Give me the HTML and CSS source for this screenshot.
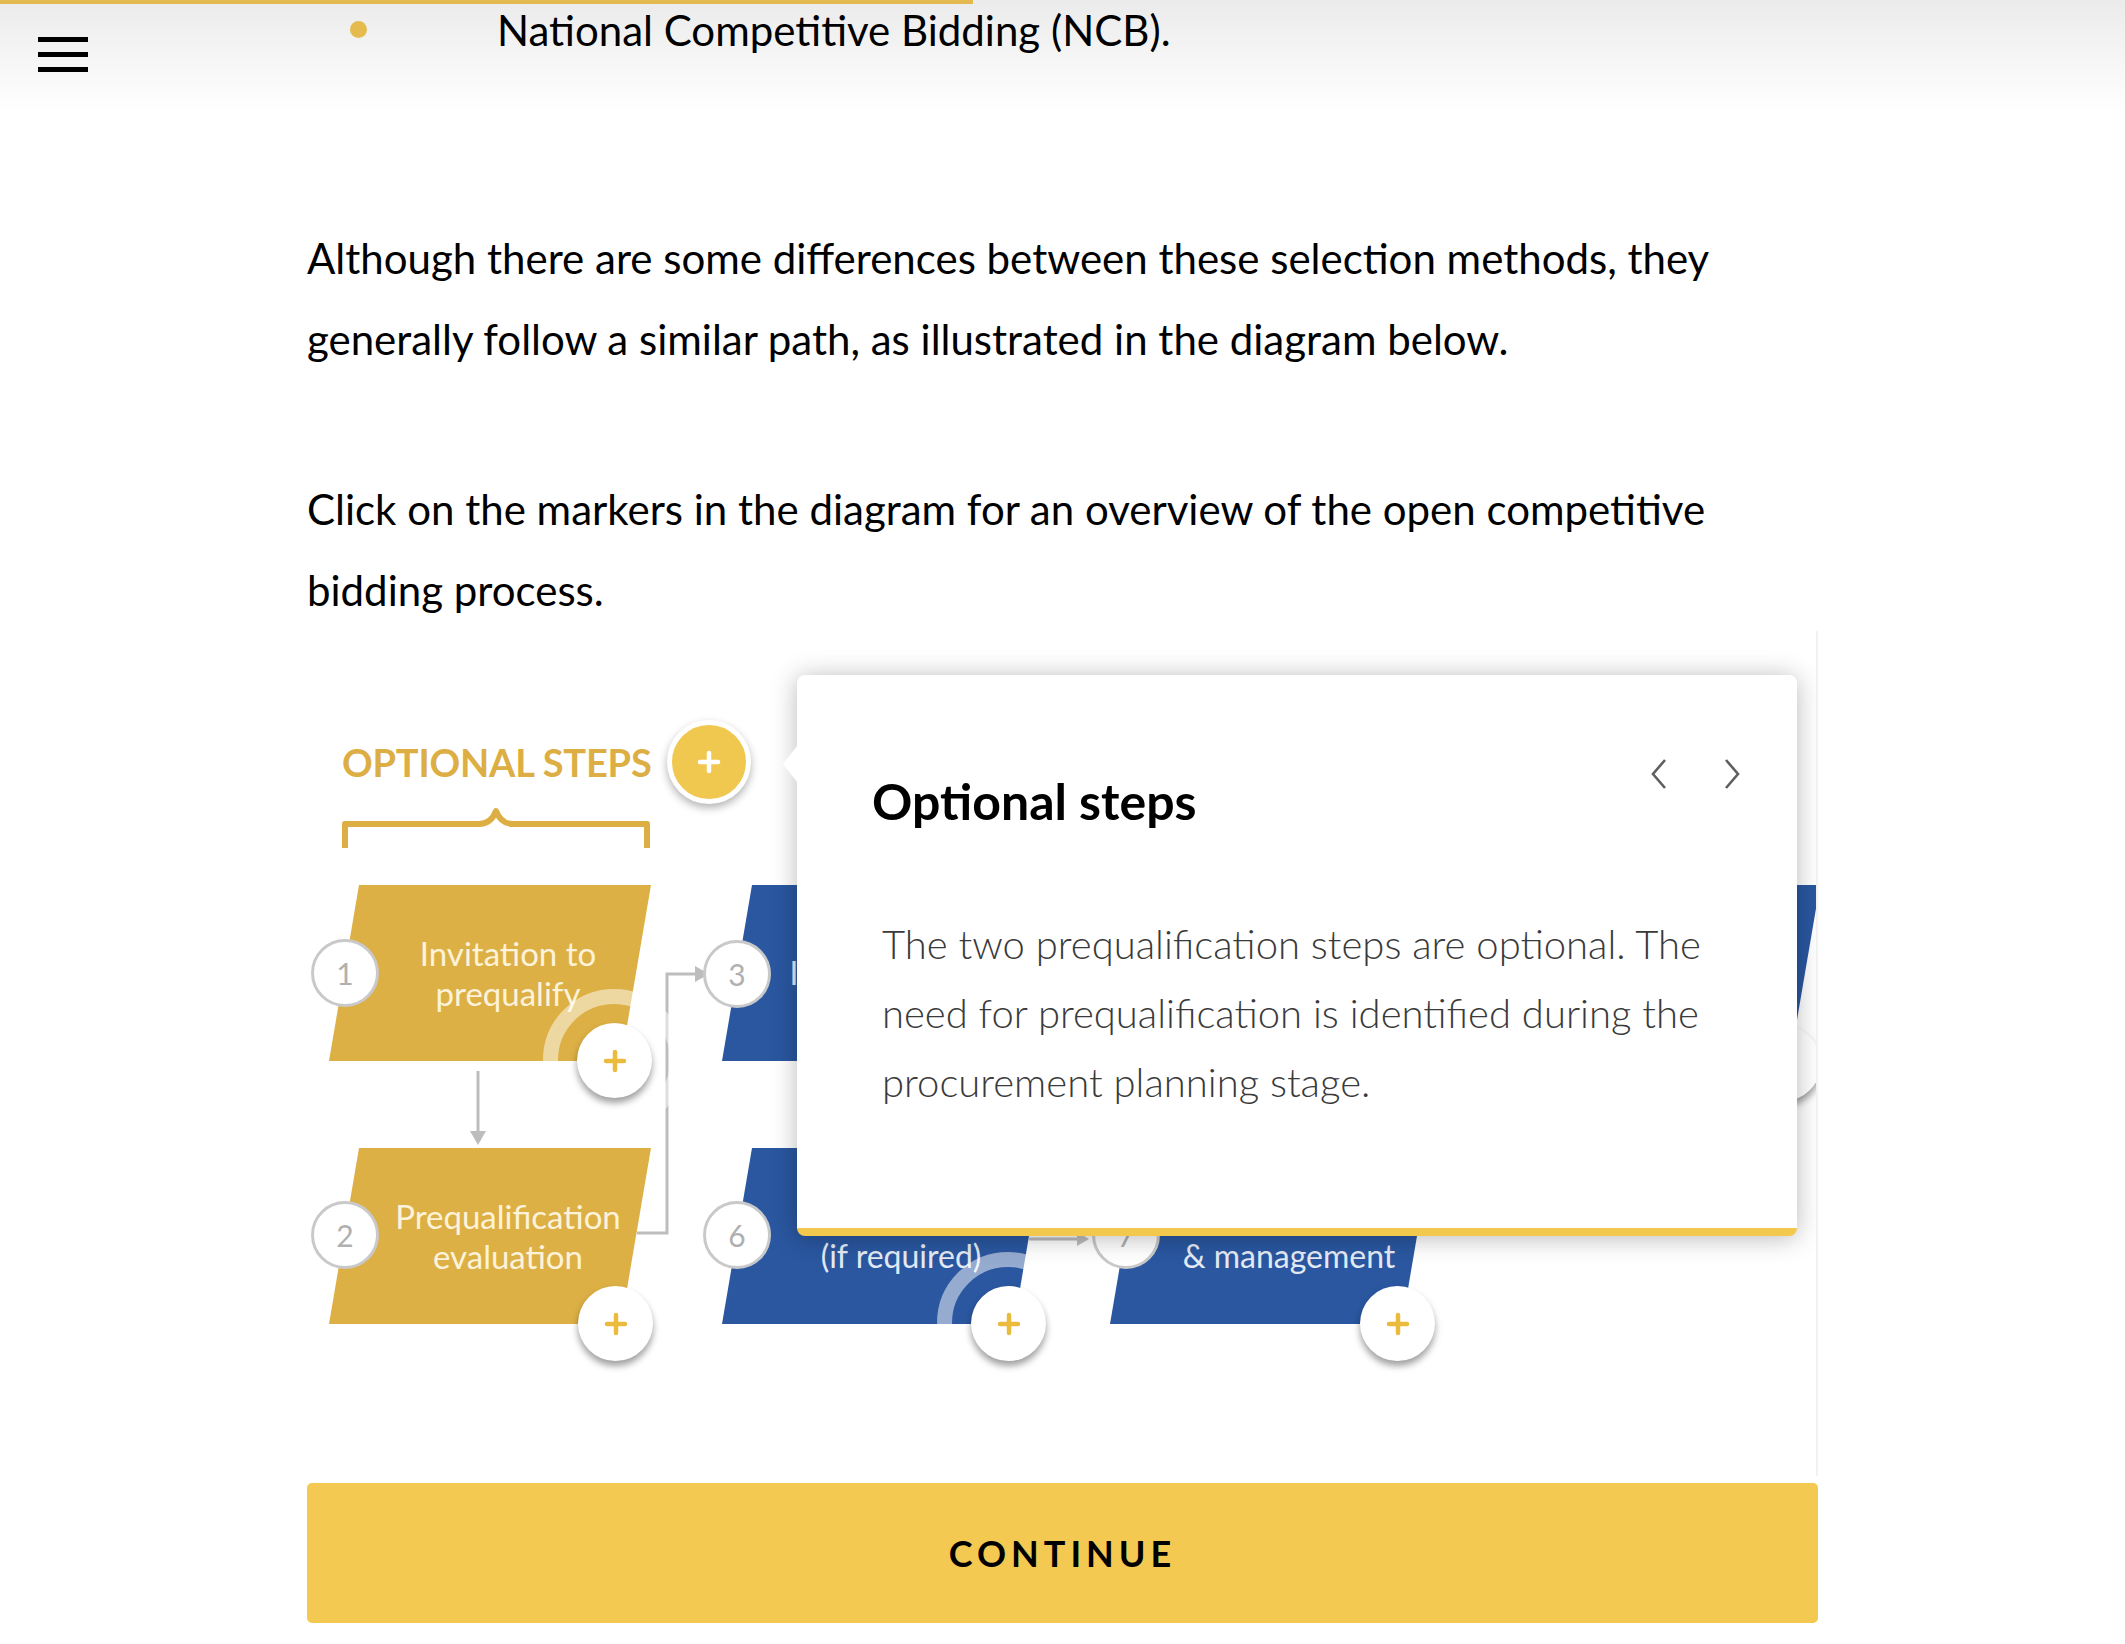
FILE: index.html
```html
<!DOCTYPE html>
<html lang="en">
<head>
<meta charset="utf-8">
<title>Selection methods</title>
<link rel="stylesheet" href="styles.css">
</head>
<body>
<div class="progress"></div>
<button class="menu" aria-label="Menu"><span></span><span></span><span></span></button>

<main class="content">
  <ul class="bullets">
    <li>National Competitive Bidding (NCB).</li>
  </ul>
  <p class="lead">Although there are some differences between these selection methods, they generally follow a similar path, as illustrated in the diagram below.</p>
  <p class="lead">Click on the markers in the diagram for an overview of the open competitive bidding process.</p>

  <div class="diagram">
    <div class="opt-label">OPTIONAL STEPS</div>
    <svg class="brace" viewBox="0 0 310 42" width="310" height="42">
      <path d="M4 41 V17 H138 Q150 17 155 4 Q160 17 172 17 H306 V41" fill="none" stroke="#dcae44" stroke-width="6" stroke-linejoin="round"/>
    </svg>

    <svg class="lines" viewBox="0 0 1511 845" width="1511" height="845">
      <g fill="none" stroke="#bdbdbd" stroke-width="3">
        <path d="M171 440 V504"/>
        <path d="M330 602 H360 V343 H392"/>
        <path d="M722 608 H772"/>
      </g>
      <g fill="#bdbdbd">
        <path d="M163 500 L171 514 L179 500 Z"/>
        <path d="M388 335 L402 343 L388 351 Z"/>
        <path d="M770 601 L782 608 L770 615 Z"/>
      </g>
    </svg>

    <div class="box gold b1">Invitation to<br>prequalify</div>
    <div class="box gold b2">Prequalification<br>evaluation</div>
    <div class="box blue b3">Invitation to bid</div>
    <div class="box blue b4"></div>
    <div class="box blue b5"></div>
    <div class="box blue b6">Clarification<br>(if required)</div>
    <div class="box blue b7">Contract award<br>&amp; management</div>

    <div class="num n1">1</div>
    <div class="num n2">2</div>
    <div class="num n3">3</div>
    <div class="num n4"></div>
    <div class="num n5"></div>
    <div class="num n6">6</div>
    <div class="num n7">7</div>

    <div class="ring r1"></div>
    <div class="ring r6"></div>

    <button class="marker m1" aria-label="Step 1"><svg viewBox="0 0 24 24" width="24" height="24"><path d="M12 3v18M3 12h18"/></svg></button>
    <button class="marker m2" aria-label="Step 2"><svg viewBox="0 0 24 24" width="24" height="24"><path d="M12 3v18M3 12h18"/></svg></button>
    <button class="marker m3" aria-label="Step 3"><svg viewBox="0 0 24 24" width="24" height="24"><path d="M12 3v18M3 12h18"/></svg></button>
    <button class="marker m4" aria-label="Step 4"><svg viewBox="0 0 24 24" width="24" height="24"><path d="M12 3v18M3 12h18"/></svg></button>
    <button class="marker m5" aria-label="Step 5"><svg viewBox="0 0 24 24" width="24" height="24"><path d="M12 3v18M3 12h18"/></svg></button>
    <button class="marker m6" aria-label="Step 6"><svg viewBox="0 0 24 24" width="24" height="24"><path d="M12 3v18M3 12h18"/></svg></button>
    <button class="marker m7" aria-label="Step 7"><svg viewBox="0 0 24 24" width="24" height="24"><path d="M12 3v18M3 12h18"/></svg></button>

    <button class="marker-active" aria-label="Optional steps"><svg viewBox="0 0 24 24" width="24" height="24"><path d="M12 3v18M3 12h18"/></svg></button>

    <div class="popup">
      <div class="popup-head">
        <h2 class="popup-title">Optional steps</h2>
        <div class="popup-nav">
          <button class="nav-btn" aria-label="Previous"><svg viewBox="0 0 20 34" width="20" height="34"><path d="M16 3 L4 17 L16 31"/></svg></button>
          <button class="nav-btn" aria-label="Next"><svg viewBox="0 0 20 34" width="20" height="34"><path d="M4 3 L16 17 L4 31"/></svg></button>
        </div>
      </div>
      <p class="popup-body">The two prequalification steps are optional. The need for prequalification is identified during the procurement planning stage.</p>
    </div>
  </div>

  <button class="continue">CONTINUE</button>
</main>
</body>
</html>
```

FILE: styles.css
```css
* { box-sizing: border-box; }

html, body {
  margin: 0;
  padding: 0;
}

body {
  font-family: Lato, "Open Sans", "Liberation Sans", sans-serif;
  color: #000;
  background: #fff linear-gradient(#ebebeb 0, #fff 112px) no-repeat;
  background-size: 100% 112px;
}

.progress {
  position: fixed;
  top: 0;
  left: 0;
  width: 973px;
  height: 4px;
  background: #e2ba4f;
  z-index: 5;
}

.menu {
  position: fixed;
  top: 37px;
  left: 38px;
  display: flex;
  flex-direction: column;
  gap: 10px;
  padding: 0;
  border: 0;
  background: none;
  z-index: 5;
}
.menu span {
  display: block;
  width: 50px;
  height: 5px;
  background: #000;
}

.content {
  width: 1511px;
  margin: -10px auto 0;
}

.bullets {
  list-style: none;
  margin: 0;
  padding: 0 0 0 190px;
  font-size: 42px;
  line-height: 81px;
}
.bullets li {
  position: relative;
}
.bullets li::before {
  content: "";
  position: absolute;
  left: -147px;
  top: 31px;
  width: 17px;
  height: 17px;
  border-radius: 50%;
  background: #e6bb4d;
}

.lead {
  margin: 0;
  font-size: 42px;
  line-height: 81px;
}
.bullets + .lead { margin-top: 147px; }
.lead + .lead { margin-top: 89px; }

/* Diagram */
.diagram {
  position: relative;
  height: 845px;
  overflow: hidden;
  border-right: 2px solid #f2f2f2;
}

.opt-label {
  position: absolute;
  left: 35px;
  top: 108px;
  font-weight: 700;
  font-size: 38px;
  line-height: 46px;
  letter-spacing: -0.2px;
  color: #dcae44;
  white-space: nowrap;
}

.brace {
  position: absolute;
  left: 34px;
  top: 176px;
}

.lines {
  position: absolute;
  left: 0;
  top: 0;
}

.box {
  position: absolute;
  width: 322px;
  height: 176px;
  clip-path: polygon(30px 0, 100% 0, calc(100% - 30px) 100%, 0 100%);
  display: flex;
  align-items: center;
  justify-content: center;
  text-align: center;
  padding-left: 36px;
  line-height: 40px;
  white-space: nowrap;
}
.gold { background: #ddb045; color: #fcf3da; font-size: 33px; }
.blue { background: #2a57a0; color: #e4eaf4; font-size: 32px; }

.b1 { left: 22px;   top: 254px; }
.b2 { left: 22px;   top: 517px; }
.b3 { left: 415px;  top: 254px; }
.b6 { left: 415px;  top: 517px; }
.b4 { left: 803px;  top: 254px; }
.b7 { left: 803px;  top: 517px; }
.b5 { left: 1191px; top: 254px; }

.num {
  position: absolute;
  width: 68px;
  height: 68px;
  margin: -34px 0 0 -34px;
  border-radius: 50%;
  border: 3px solid #c9c9c9;
  background: #fff;
  color: #b0b0b0;
  font-size: 30px;
  line-height: 62px;
  text-align: center;
}
.n1 { left: 38px;   top: 342px; }
.n2 { left: 38px;   top: 604px; }
.n3 { left: 430px;  top: 343px; }
.n6 { left: 430px;  top: 604px; }
.n4 { left: 818px;  top: 343px; }
.n7 { left: 819px;  top: 604px; }
.n5 { left: 1206px; top: 343px; }

.ring {
  position: absolute;
  width: 142px;
  height: 142px;
  margin: -71px 0 0 -71px;
  border-radius: 50%;
  border: 15px solid rgba(255, 255, 255, 0.5);
}
.r1 { left: 307px; top: 429px; }
.r6 { left: 701px; top: 692px; }

.marker {
  position: absolute;
  width: 75px;
  height: 75px;
  margin: -37px 0 0 -37px;
  padding: 0;
  border: 0;
  border-radius: 50%;
  background: #fff;
  box-shadow: 0 5px 7px rgba(0, 0, 0, 0.38);
  display: flex;
  align-items: center;
  justify-content: center;
}
.marker svg path {
  stroke: #ebbb3d;
  stroke-width: 4.5;
  stroke-linecap: round;
  fill: none;
}
.m1 { left: 307px;  top: 429px; }
.m2 { left: 308px;  top: 692px; }
.m3 { left: 697px;  top: 429px; }
.m6 { left: 701px;  top: 692px; }
.m4 { left: 1086px; top: 429px; }
.m7 { left: 1090px; top: 692px; }
.m5 { left: 1476px; top: 432px; }

.marker-active {
  position: absolute;
  left: 360px;
  top: 89px;
  width: 84px;
  height: 84px;
  padding: 0;
  border: 5px solid #fff;
  border-radius: 50%;
  background: #f1c84f;
  box-shadow: 0 4px 8px rgba(0, 0, 0, 0.3);
  display: flex;
  align-items: center;
  justify-content: center;
}
.marker-active svg path {
  stroke: #fff;
  stroke-width: 4.5;
  stroke-linecap: round;
  fill: none;
}

/* Popup */
.popup {
  position: absolute;
  left: 490px;
  top: 44px;
  width: 1000px;
  height: 561px;
  background: #fff;
  border-radius: 8px;
  border-bottom: 8px solid #f2c94c;
  box-shadow: 0 2px 26px rgba(0, 0, 0, 0.28);
  padding: 70px 0 0 75px;
}
.popup::before {
  content: "";
  position: absolute;
  left: -14px;
  top: 71px;
  border-style: solid;
  border-width: 18px 14px 18px 0;
  border-color: transparent #fff transparent transparent;
}

.popup-head {
  display: flex;
  justify-content: space-between;
  align-items: flex-start;
  padding-right: 55px;
}
.popup-title {
  margin: 26px 0 0;
  font-size: 50px;
  line-height: 60px;
  font-weight: 700;
  color: #000;
}
.popup-nav {
  display: flex;
  gap: 53px;
  margin-top: 12px;
}
.nav-btn {
  padding: 0;
  border: 0;
  background: none;
  width: 20px;
  height: 34px;
}
.nav-btn svg path {
  fill: none;
  stroke: #5f5f5f;
  stroke-width: 2.6;
}

.popup-body {
  margin: 79px 0 0;
  padding-left: 10px;
  padding-right: 50px;
  font-family: "Lato Light", Lato, "Open Sans", sans-serif;
  font-size: 40px;
  line-height: 69px;
  font-weight: 300;
  color: #3a3a3a;
}

.continue {
  display: block;
  width: 100%;
  height: 140px;
  margin-top: 7px;
  border: 0;
  border-radius: 5px;
  background: #f3c952;
  font-family: Lato, "Open Sans", "Liberation Sans", sans-serif;
  font-weight: 700;
  font-size: 36px;
  letter-spacing: 5px;
  color: #000;
}
```
